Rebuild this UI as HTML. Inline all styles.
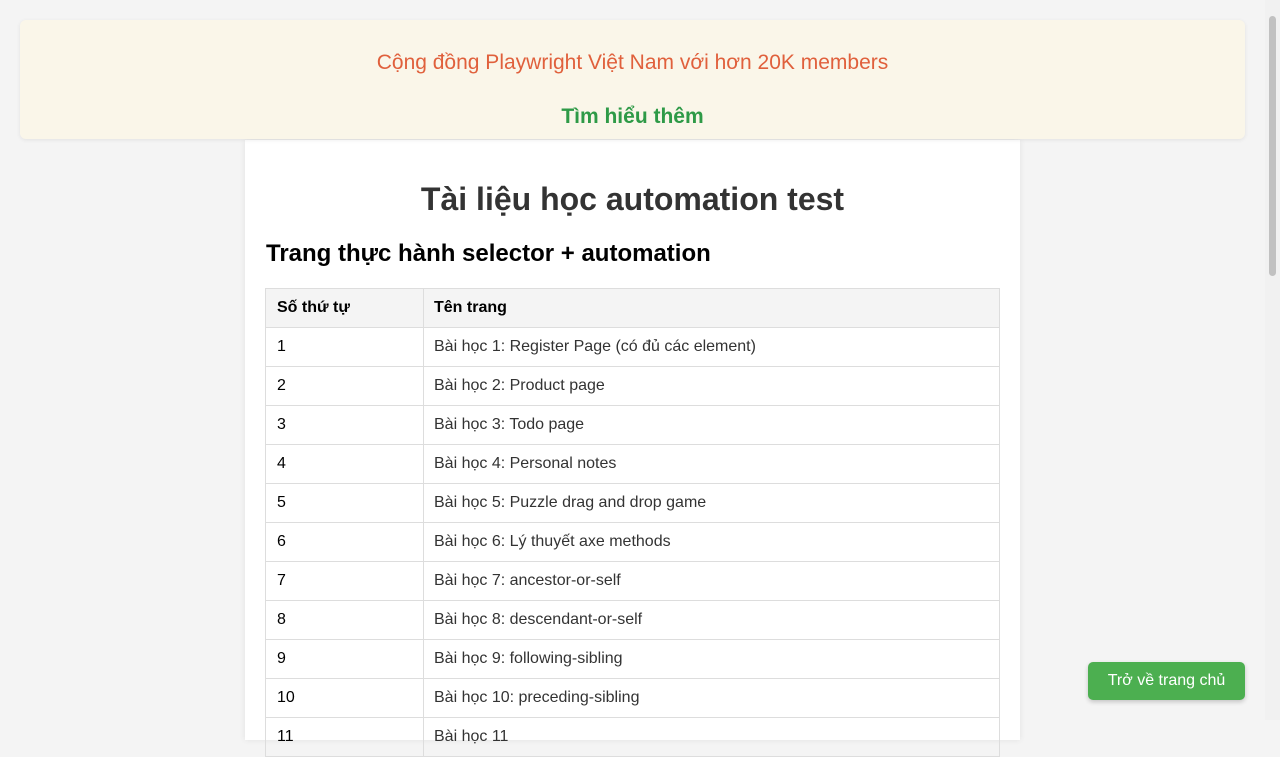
<!DOCTYPE html>
<html><head><meta charset="utf-8">
<style>
html,body{margin:0;padding:0;height:720px;overflow:hidden;background:#f4f4f4;font-family:"Liberation Sans",Arial,sans-serif;}
.banner{position:absolute;left:20px;top:20px;width:1225px;height:119px;background:#faf6e9;border-radius:6px;box-shadow:0 1px 4px rgba(0,0,0,0.08);text-align:center;z-index:2;}
.b1{position:absolute;left:0;right:0;top:31px;font-size:21px;color:#e0603c;}
.b2{position:absolute;left:0;right:0;top:85px;font-size:21px;font-weight:bold;color:#2e9a47;}
.main{position:absolute;left:245px;top:140px;width:775px;height:600px;background:#fff;box-shadow:0 0 6px rgba(0,0,0,0.08);}
h1{position:absolute;left:0;top:181px;margin:0;text-align:center;font-size:32px;color:#333;}
h2{position:absolute;left:266px;top:240px;margin:0;font-size:24px;color:#000;}
table{position:absolute;left:265px;top:288px;width:735px;border-collapse:collapse;font-size:16px;}
td,th{border:1px solid #ddd;height:38px;padding:0 10px;text-align:left;}
th{background:#f4f4f4;color:#000;font-weight:bold;}
td:first-child,th:first-child{width:136px;color:#000;padding-left:11px;}
td{color:#333;}
.btn{position:absolute;left:1088px;top:662px;width:157px;height:38px;background:#4caf50;color:#fff;border-radius:5px;font-size:16px;line-height:38px;text-align:center;box-shadow:0 2px 5px rgba(0,0,0,0.2);}
.sb{position:absolute;right:0;top:0;width:15px;height:720px;background:#f1f1f1;}
.th{position:absolute;left:4px;top:16px;width:7px;height:260px;background:#c1c1c1;border-radius:4px;}
</style></head><body>
<div class="main"></div>
<div class="banner"><div class="b1">Cộng đồng Playwright Việt Nam với hơn 20K members</div><div class="b2">Tìm hiểu thêm</div></div>
<h1 style="width:1265px">Tài liệu học automation test</h1>
<h2>Trang thực hành selector + automation</h2>
<table>
<tr><th>Số thứ tự</th><th>Tên trang</th></tr>
<tr><td>1</td><td>Bài học 1: Register Page (có đủ các element)</td></tr>
<tr><td>2</td><td>Bài học 2: Product page</td></tr>
<tr><td>3</td><td>Bài học 3: Todo page</td></tr>
<tr><td>4</td><td>Bài học 4: Personal notes</td></tr>
<tr><td>5</td><td>Bài học 5: Puzzle drag and drop game</td></tr>
<tr><td>6</td><td>Bài học 6: Lý thuyết axe methods</td></tr>
<tr><td>7</td><td>Bài học 7: ancestor-or-self</td></tr>
<tr><td>8</td><td>Bài học 8: descendant-or-self</td></tr>
<tr><td>9</td><td>Bài học 9: following-sibling</td></tr>
<tr><td>10</td><td>Bài học 10: preceding-sibling</td></tr>
<tr><td>11</td><td>Bài học 11</td></tr>
</table>
<div class="btn">Trở về trang chủ</div>
<div class="sb"><div class="th"></div></div>
</body></html>
